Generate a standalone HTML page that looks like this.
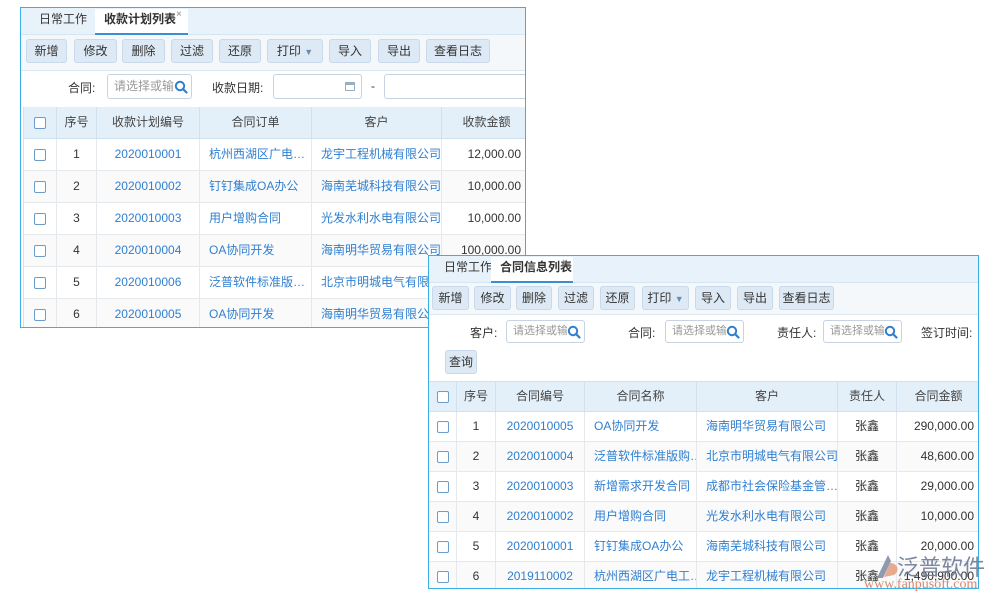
<!DOCTYPE html>
<html><head><meta charset="utf-8"><style>
*{margin:0;padding:0;box-sizing:border-box}
body{width:1000px;height:600px;background:#fff;position:relative;overflow:hidden;font-family:"Liberation Sans","Noto Sans CJK SC",sans-serif;font-size:12px;color:#333}
.p{position:absolute;background:#fff;border:1px solid #3aaee6;overflow:hidden}
.tabs{position:absolute;left:0;right:0;top:0;background:#e8f2fb;border-bottom:1px solid #d5e5f2}
.tab{position:absolute;top:0;height:100%;}
.tb{position:absolute;left:0;right:0;background:#f4f8fb;border-bottom:1px solid #dbe6ee}
.btn{position:absolute;background:#dde9f4;border:1px solid #c7d9ea;border-radius:3px;text-align:center;color:#333;font-size:12px}
.lbl{position:absolute;font-size:12px;color:#333}
.inp{position:absolute;border:1px solid #c5d4e0;border-radius:3px;background:#fff;color:#999;font-size:11px;padding-left:6px;overflow:hidden;white-space:nowrap}
.inp svg{position:absolute;right:3px;top:50%;margin-top:-7px;background:#fff}
.row{position:absolute;left:0;right:0;border-bottom:1px solid #e5e8ec}
.c{position:absolute;top:0;height:100%;border-right:1px solid #e5e8ec;text-align:center;white-space:nowrap;overflow:hidden}
.hd{background:#e3eff9;border-bottom:1px solid #cfe0ee}
.hd .c{border-right:1px solid #cfe0ee;color:#444}
.cb{display:inline-block;width:12px;height:12px;border:1px solid #6a9ccc;border-radius:2px;background:#fff;vertical-align:middle}
.bl{color:#2f7fd0}
.r{text-align:right;padding-right:6px}
.l{text-align:left;padding-left:9px}
.cal{position:absolute;right:6px;top:7px;width:10px;height:9px;border:1px solid #9aaec2;border-top:3px solid #9aaec2}
</style></head><body>

<svg width="0" height="0" style="position:absolute"><defs><symbol id="s" viewBox="0 0 14 14"><circle cx="6" cy="6" r="4.2" fill="none" stroke="#2f7fd0" stroke-width="2"/><path d="M9 9 L12.5 12.5" stroke="#2f7fd0" stroke-width="2.2" stroke-linecap="round"/></symbol></defs></svg>

<!-- Panel 1 -->
<div class="p" style="left:20px;top:7px;width:506px;height:321px">
 <div class="tabs" style="height:27px">
  <div class="tab" style="left:18px;line-height:22px">日常工作</div>
  <div style="position:absolute;left:74px;top:1px;width:93px;height:26px;background:#fff;border-bottom:2px solid #3a8ed4;font-weight:bold;line-height:20px;padding-left:9px">收款计划列表<span style="position:absolute;left:81px;top:-4px;font-weight:normal;color:#888;font-size:10px">×</span></div>
 </div>
 <div class="tb" style="top:27px;height:36px">
  <div class="btn" style="left:5px;top:4px;width:41px;height:24px;line-height:22px">新增</div>
  <div class="btn" style="left:53px;top:4px;width:43px;height:24px;line-height:22px">修改</div>
  <div class="btn" style="left:101px;top:4px;width:43px;height:24px;line-height:22px">删除</div>
  <div class="btn" style="left:150px;top:4px;width:42px;height:24px;line-height:22px">过滤</div>
  <div class="btn" style="left:198px;top:4px;width:42px;height:24px;line-height:22px">还原</div>
  <div class="btn" style="left:246px;top:4px;width:56px;height:24px;line-height:22px">打印 <span style="color:#6a8db0;font-size:9px">▼</span></div>
  <div class="btn" style="left:308px;top:4px;width:42px;height:24px;line-height:22px">导入</div>
  <div class="btn" style="left:357px;top:4px;width:42px;height:24px;line-height:22px">导出</div>
  <div class="btn" style="left:405px;top:4px;width:64px;height:24px;line-height:22px">查看日志</div>
 </div>
 <div class="lbl" style="left:47px;top:71px">合同:</div>
 <div class="inp" style="left:86px;top:66px;width:85px;height:25px;line-height:23px;font-size:12px">请选择或输入<svg width="14" height="14"><use href="#s"/></svg></div>
 <div class="lbl" style="left:191px;top:71px">收款日期:</div>
 <div class="inp" style="left:252px;top:66px;width:89px;height:25px"><div class="cal"></div></div>
 <div class="lbl" style="left:350px;top:71px">-</div>
 <div class="inp" style="left:363px;top:66px;width:160px;height:25px"><div class="cal"></div></div>
 <div style="position:absolute;left:2px;top:99px;right:0;bottom:0;border-left:1px solid #cfe0ee">
  <div class="row hd" style="top:0;height:32px;line-height:31px">
   <div class="c" style="left:0;width:33px"><span class="cb"></span></div>
   <div class="c" style="left:33px;width:40px">序号</div>
   <div class="c" style="left:73px;width:103px">收款计划编号</div>
   <div class="c" style="left:176px;width:112px">合同订单</div>
   <div class="c" style="left:288px;width:130px">客户</div>
   <div class="c" style="left:418px;width:90px">收款金额</div>
  </div>
  <div class="row" style="top:32px;height:32px;line-height:31px"><div class="c" style="left:0;width:33px"><span class="cb"></span></div><div class="c" style="left:33px;width:40px">1</div><div class="c bl" style="left:73px;width:103px">2020010001</div><div class="c bl l" style="left:176px;width:112px">杭州西湖区广电…</div><div class="c bl l" style="left:288px;width:130px">龙宇工程机械有限公司</div><div class="c r" style="left:418px;width:85px;border-right:none">12,000.00</div></div>
  <div class="row" style="top:64px;height:32px;line-height:31px;background:#fafafa"><div class="c" style="left:0;width:33px"><span class="cb"></span></div><div class="c" style="left:33px;width:40px">2</div><div class="c bl" style="left:73px;width:103px">2020010002</div><div class="c bl l" style="left:176px;width:112px">钉钉集成OA办公</div><div class="c bl l" style="left:288px;width:130px">海南芜城科技有限公司</div><div class="c r" style="left:418px;width:85px;border-right:none">10,000.00</div></div>
  <div class="row" style="top:96px;height:32px;line-height:31px"><div class="c" style="left:0;width:33px"><span class="cb"></span></div><div class="c" style="left:33px;width:40px">3</div><div class="c bl" style="left:73px;width:103px">2020010003</div><div class="c bl l" style="left:176px;width:112px">用户增购合同</div><div class="c bl l" style="left:288px;width:130px">光发水利水电有限公司</div><div class="c r" style="left:418px;width:85px;border-right:none">10,000.00</div></div>
  <div class="row" style="top:128px;height:32px;line-height:31px;background:#fafafa"><div class="c" style="left:0;width:33px"><span class="cb"></span></div><div class="c" style="left:33px;width:40px">4</div><div class="c bl" style="left:73px;width:103px">2020010004</div><div class="c bl l" style="left:176px;width:112px">OA协同开发</div><div class="c bl l" style="left:288px;width:130px">海南明华贸易有限公司</div><div class="c r" style="left:418px;width:85px;border-right:none">100,000.00</div></div>
  <div class="row" style="top:160px;height:32px;line-height:31px"><div class="c" style="left:0;width:33px"><span class="cb"></span></div><div class="c" style="left:33px;width:40px">5</div><div class="c bl" style="left:73px;width:103px">2020010006</div><div class="c bl l" style="left:176px;width:112px">泛普软件标准版…</div><div class="c bl l" style="left:288px;width:130px">北京市明城电气有限…</div><div class="c r" style="left:418px;width:85px;border-right:none"></div></div>
  <div class="row" style="top:192px;height:32px;line-height:31px;background:#fafafa"><div class="c" style="left:0;width:33px"><span class="cb"></span></div><div class="c" style="left:33px;width:40px">6</div><div class="c bl" style="left:73px;width:103px">2020010005</div><div class="c bl l" style="left:176px;width:112px">OA协同开发</div><div class="c bl l" style="left:288px;width:130px">海南明华贸易有限公司</div><div class="c r" style="left:418px;width:85px;border-right:none"></div></div>
 </div>
</div>

<!-- Panel 2 -->
<div class="p" style="left:428px;top:255px;width:551px;height:334px">
 <div class="tabs" style="height:27px">
  <div class="tab" style="left:15px;line-height:22px">日常工作</div>
  <div style="position:absolute;left:62px;top:1px;width:82px;height:26px;background:#fff;border-bottom:2px solid #3a8ed4;font-weight:bold;line-height:20px;padding-left:9px">合同信息列表<span style="position:absolute;left:71px;top:-4px;font-weight:normal;color:#888;font-size:10px">×</span></div>
 </div>
 <div class="tb" style="top:27px;height:32px">
  <div class="btn" style="left:3px;top:3px;width:37px;height:24px;line-height:22px">新增</div>
  <div class="btn" style="left:45px;top:3px;width:37px;height:24px;line-height:22px">修改</div>
  <div class="btn" style="left:87px;top:3px;width:36px;height:24px;line-height:22px">删除</div>
  <div class="btn" style="left:129px;top:3px;width:36px;height:24px;line-height:22px">过滤</div>
  <div class="btn" style="left:171px;top:3px;width:35px;height:24px;line-height:22px">还原</div>
  <div class="btn" style="left:213px;top:3px;width:47px;height:24px;line-height:22px">打印 <span style="color:#6a8db0;font-size:9px">▼</span></div>
  <div class="btn" style="left:266px;top:3px;width:36px;height:24px;line-height:22px">导入</div>
  <div class="btn" style="left:308px;top:3px;width:36px;height:24px;line-height:22px">导出</div>
  <div class="btn" style="left:350px;top:3px;width:55px;height:24px;line-height:22px">查看日志</div>
 </div>
 <div class="lbl" style="left:41px;top:68px">客户:</div>
 <div class="inp" style="left:77px;top:64px;width:79px;height:23px;line-height:21px">请选择或输入<svg width="14" height="14"><use href="#s"/></svg></div>
 <div class="lbl" style="left:199px;top:68px">合同:</div>
 <div class="inp" style="left:236px;top:64px;width:79px;height:23px;line-height:21px">请选择或输入<svg width="14" height="14"><use href="#s"/></svg></div>
 <div class="lbl" style="left:348px;top:68px">责任人:</div>
 <div class="inp" style="left:394px;top:64px;width:79px;height:23px;line-height:21px">请选择或输入<svg width="14" height="14"><use href="#s"/></svg></div>
 <div class="lbl" style="left:492px;top:68px">签订时间:</div>
 <div class="btn" style="left:16px;top:94px;width:32px;height:24px;line-height:22px">查询</div>
 <div style="position:absolute;left:0;top:125px;right:0;bottom:0;border-top:1px solid #cfe0ee">
  <div class="row hd" style="top:0;height:30px;line-height:29px">
   <div class="c" style="left:0;width:28px"><span class="cb"></span></div>
   <div class="c" style="left:28px;width:39px">序号</div>
   <div class="c" style="left:67px;width:89px">合同编号</div>
   <div class="c" style="left:156px;width:112px">合同名称</div>
   <div class="c" style="left:268px;width:141px">客户</div>
   <div class="c" style="left:409px;width:59px">责任人</div>
   <div class="c" style="left:468px;width:83px;border-right:none">合同金额</div>
  </div>
  <div class="row" style="top:30px;height:30px;line-height:29px"><div class="c" style="left:0;width:28px"><span class="cb"></span></div><div class="c" style="left:28px;width:39px">1</div><div class="c bl" style="left:67px;width:89px">2020010005</div><div class="c bl l" style="left:156px;width:112px">OA协同开发</div><div class="c bl l" style="left:268px;width:141px">海南明华贸易有限公司</div><div class="c" style="left:409px;width:59px">张鑫</div><div class="c r" style="left:468px;width:83px;border-right:none">290,000.00</div></div>
  <div class="row" style="top:60px;height:30px;line-height:29px;background:#fafafa"><div class="c" style="left:0;width:28px"><span class="cb"></span></div><div class="c" style="left:28px;width:39px">2</div><div class="c bl" style="left:67px;width:89px">2020010004</div><div class="c bl l" style="left:156px;width:112px">泛普软件标准版购…</div><div class="c bl l" style="left:268px;width:141px">北京市明城电气有限公司</div><div class="c" style="left:409px;width:59px">张鑫</div><div class="c r" style="left:468px;width:83px;border-right:none">48,600.00</div></div>
  <div class="row" style="top:90px;height:30px;line-height:29px"><div class="c" style="left:0;width:28px"><span class="cb"></span></div><div class="c" style="left:28px;width:39px">3</div><div class="c bl" style="left:67px;width:89px">2020010003</div><div class="c bl l" style="left:156px;width:112px">新增需求开发合同</div><div class="c bl l" style="left:268px;width:141px">成都市社会保险基金管…</div><div class="c" style="left:409px;width:59px">张鑫</div><div class="c r" style="left:468px;width:83px;border-right:none">29,000.00</div></div>
  <div class="row" style="top:120px;height:30px;line-height:29px;background:#fafafa"><div class="c" style="left:0;width:28px"><span class="cb"></span></div><div class="c" style="left:28px;width:39px">4</div><div class="c bl" style="left:67px;width:89px">2020010002</div><div class="c bl l" style="left:156px;width:112px">用户增购合同</div><div class="c bl l" style="left:268px;width:141px">光发水利水电有限公司</div><div class="c" style="left:409px;width:59px">张鑫</div><div class="c r" style="left:468px;width:83px;border-right:none">10,000.00</div></div>
  <div class="row" style="top:150px;height:30px;line-height:29px"><div class="c" style="left:0;width:28px"><span class="cb"></span></div><div class="c" style="left:28px;width:39px">5</div><div class="c bl" style="left:67px;width:89px">2020010001</div><div class="c bl l" style="left:156px;width:112px">钉钉集成OA办公</div><div class="c bl l" style="left:268px;width:141px">海南芜城科技有限公司</div><div class="c" style="left:409px;width:59px">张鑫</div><div class="c r" style="left:468px;width:83px;border-right:none">20,000.00</div></div>
  <div class="row" style="top:180px;height:30px;line-height:29px;background:#fafafa;border-bottom:none"><div class="c" style="left:0;width:28px"><span class="cb"></span></div><div class="c" style="left:28px;width:39px">6</div><div class="c bl" style="left:67px;width:89px">2019110002</div><div class="c bl l" style="left:156px;width:112px">杭州西湖区广电工…</div><div class="c bl l" style="left:268px;width:141px">龙宇工程机械有限公司</div><div class="c" style="left:409px;width:59px">张鑫</div><div class="c r" style="left:468px;width:83px;border-right:none">1,490,900.00</div></div>
 </div>
</div>

<!-- logo -->
<svg style="position:absolute;left:874px;top:553px" width="26" height="28" viewBox="0 0 26 28">
 <path d="M14 2 L3 25 L9 25 L17 8 Z" fill="#7b88a3" opacity="0.85"/>
 <path d="M16 10 C24 10 26 18 20 22 L10 24 Z" fill="#e39a7c" opacity="0.85"/>
</svg>
<div style="position:absolute;left:897px;top:551px;font-size:22px;color:#6d7b96;opacity:.9;font-family:'Noto Sans CJK SC',sans-serif;line-height:30px">泛普软件</div>
<div style="position:absolute;left:864px;top:578px;font-size:14px;color:#d9876a;font-family:'Liberation Serif',serif;line-height:14px">www.fanpusoft.com</div>
</body></html>
